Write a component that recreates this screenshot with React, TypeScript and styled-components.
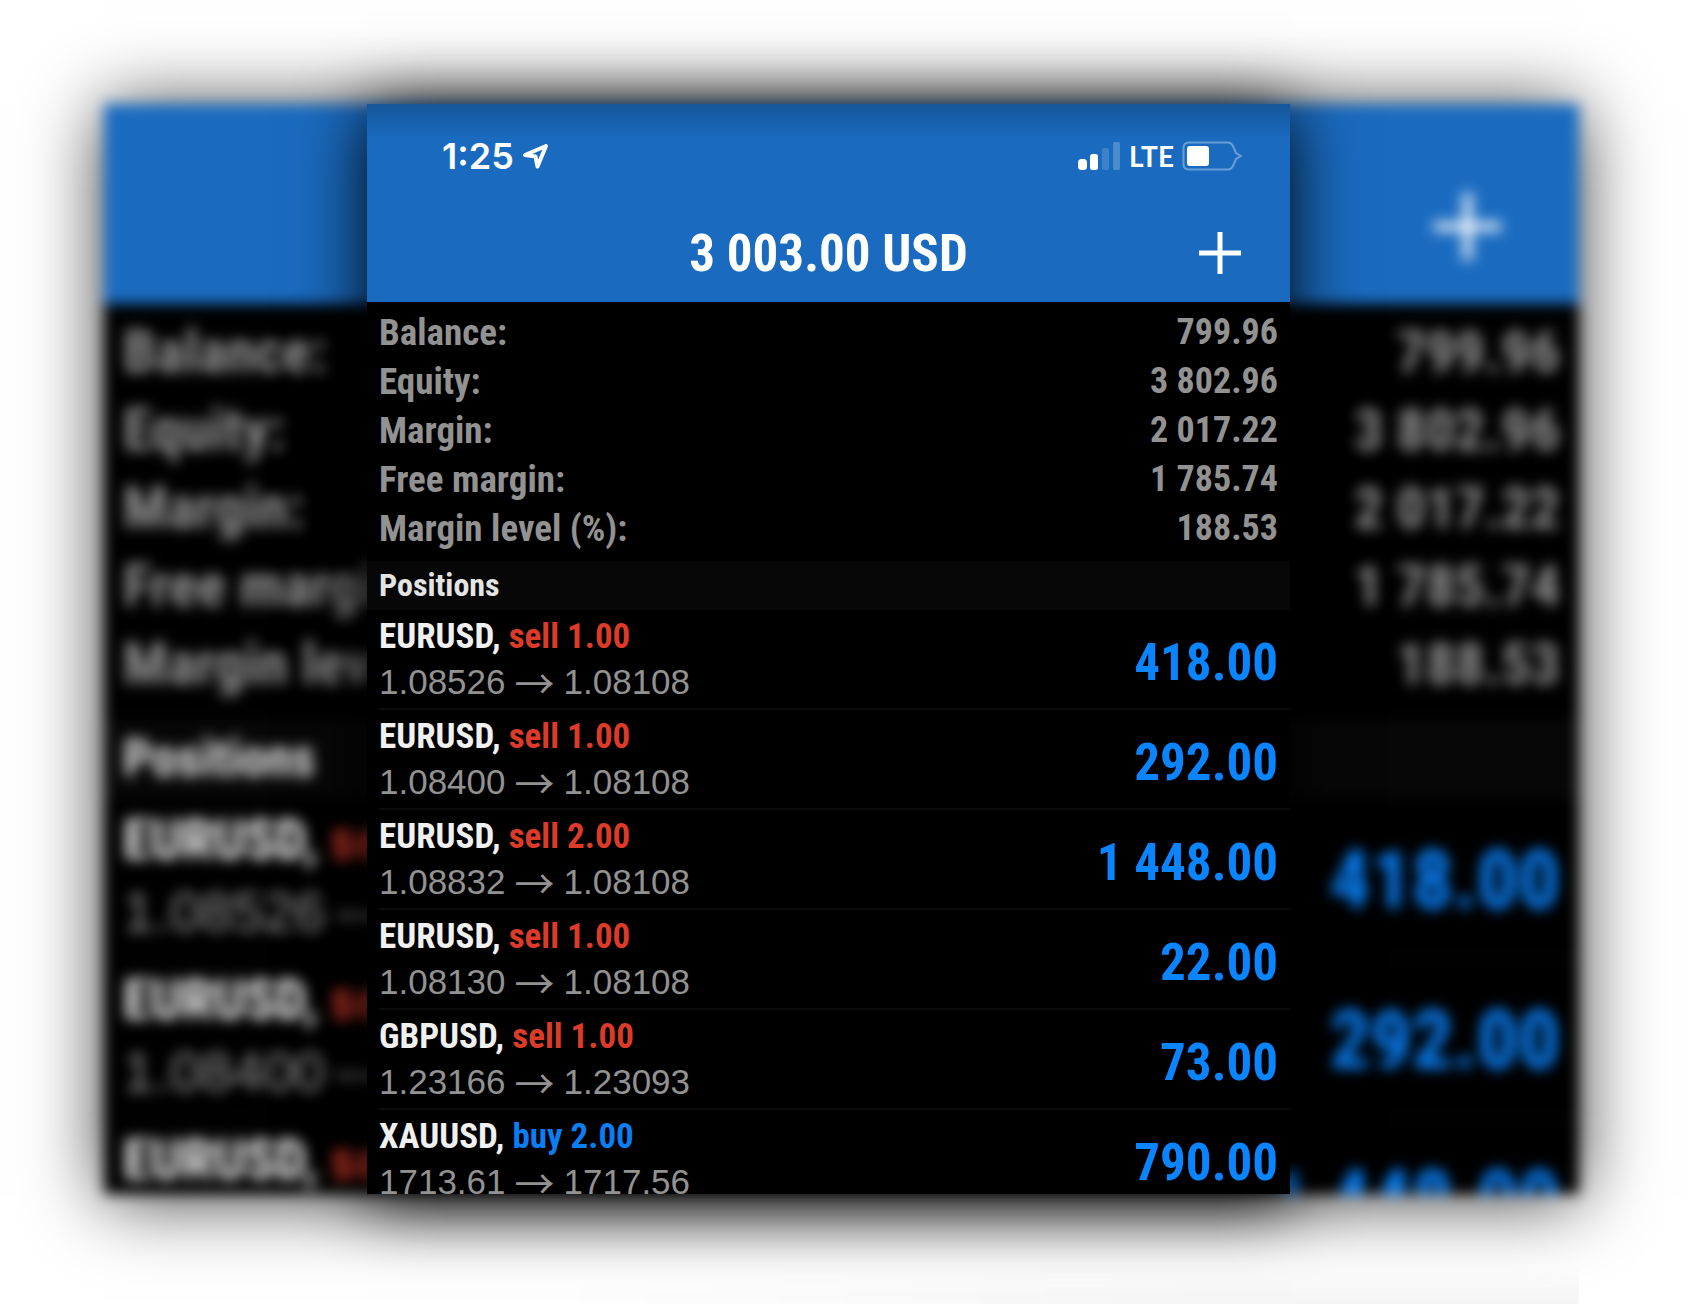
import React from "react";
import styled, { createGlobalStyle, css, ThemeProvider } from "styled-components";

const GlobalStyle = createGlobalStyle`
  *, *::before, *::after { box-sizing: border-box; }
  html, body { margin: 0; background: #ffffff; }
  body { overflow: hidden; }
`;

const condensed = `"Roboto Condensed", "Arial Narrow", "Liberation Sans", sans-serif`;
const regular = `"Liberation Sans", Arial, sans-serif`;

/* Two densities of the same screen: the sharp one in front and the enlarged one behind. */
const compact = {
  crop: 0,
  statusHeight: 100,
  statusPadding: "4px 48px 0 75px",
  navHeight: 98,
  gutter: 12,
  plus: 42,
  plusEdge: 49,
  title: 51,
  label: 37,
  value: 36,
  symbol: 35,
  section: 32,
  price: 35,
  arrow: 40,
  amount: 51,
  line: 49,
  summaryPadding: "6px 12px 8px",
  sectionHeight: 49,
  rowHeight: 100,
  rowTop: 4,
  symbolLine: 46,
  priceLine: 44,
  amountTop: 8,
};

const enlarged: typeof compact = {
  crop: 115,
  statusHeight: 160,
  statusPadding: "0 77px 0 118px",
  navHeight: 155,
  gutter: 19,
  plus: 67,
  plusEdge: 78,
  title: 82,
  label: 59,
  value: 58,
  symbol: 56,
  section: 51,
  price: 56,
  arrow: 64,
  amount: 82,
  line: 78,
  summaryPadding: "9px 19px 16px",
  sectionHeight: 80,
  rowHeight: 160,
  rowTop: 4,
  symbolLine: 74,
  priceLine: 70,
  amountTop: 4,
};

type Density = typeof compact;
const size = (key: keyof Density) => (p: { theme: any }) => `${p.theme[key]}px`;

const Page = styled.div`
  display: flex;
  flex-direction: column;
  min-height: 100vh;
  padding: 104px 117px 0 104px;
  overflow: hidden;
`;

const Stage = styled.main`
  display: grid;
  grid-template-columns: 263fr 923fr 289fr;
  grid-template-rows: calc(100vh - 214px);
`;

const Card = styled.section<{ $back?: boolean }>`
  grid-row: 1;
  grid-column: ${(p) => (p.$back ? "1 / -1" : "2")};
  min-width: 0;
  overflow: hidden;
  background: #000000;
  ${(p) =>
    p.$back
      ? css`
          filter: blur(7px);
          box-shadow: 0 4px 70px rgba(0, 0, 0, 0.8);
        `
      : css`
          z-index: 1;
          box-shadow: 0 6px 66px rgba(0, 0, 0, 0.98);
        `}
`;

const Content = styled.div`
  margin-top: -${size("crop")};
`;

const Header = styled.header<{ $shaded: boolean }>`
  color: #ffffff;
  background: ${(p) =>
    p.$shaded
      ? "linear-gradient(rgba(0, 0, 0, 0.2), rgba(0, 0, 0, 0) 36px), #1a6bc0"
      : "#1a6bc0"};
`;

const StatusBar = styled.div`
  display: flex;
  align-items: center;
  justify-content: space-between;
  height: ${size("statusHeight")};
  padding: ${(p) => (p.theme as any).statusPadding};
`;

const StatusGroup = styled.div`
  display: flex;
  align-items: center;
  gap: 8px;
`;

const Clock = styled.span`
  font: 600 36px/44px Inter, sans-serif;
`;

const Carrier = styled.span`
  font: bold 28px/44px Lato, sans-serif;
`;

const NavBar = styled.div`
  display: grid;
  grid-template-columns: 1fr auto 1fr;
  align-items: center;
  height: ${size("navHeight")};
  padding: 0 ${size("plusEdge")};
`;

const Title = styled.h1`
  grid-column: 2;
  margin: 0;
  padding-top: 2px;
  font: bold ${size("title")}/1.2 ${condensed};
  white-space: nowrap;
`;

const AddButton = styled.button`
  display: flex;
  grid-column: 3;
  justify-self: end;
  padding: 0;
  border: 0;
  background: none;
  color: inherit;

  svg {
    width: ${size("plus")};
    height: ${size("plus")};
  }
`;

const Summary = styled.dl`
  margin: 0;
  padding: ${(p) => (p.theme as any).summaryPadding};
  color: #929292;
  font: bold ${size("label")}/${size("line")} ${condensed};
`;

const SummaryRow = styled.div`
  display: flex;
  justify-content: space-between;
  height: ${size("line")};
  white-space: nowrap;

  dd {
    margin: 0;
    font-size: ${size("value")};
  }
`;

const SectionTitle = styled.h2`
  margin: 0;
  padding-left: ${size("gutter")};
  background: #070707;
  color: #e4e4e4;
  font: bold ${size("section")}/${size("sectionHeight")} ${condensed};
`;

const PositionList = styled.ul`
  margin: 0;
  padding: 0 0 0 ${size("gutter")};
  list-style: none;
`;

const PositionRow = styled.li`
  display: flex;
  align-items: center;
  justify-content: space-between;
  height: ${size("rowHeight")};
  padding-right: ${size("gutter")};
  border-bottom: 2px solid #0c0c0c;
  white-space: nowrap;
`;

const Deal = styled.div`
  align-self: flex-start;
  padding-top: ${size("rowTop")};
`;

const Symbol = styled.div`
  height: ${size("symbolLine")};
  color: #f0f0f0;
  font: bold ${size("symbol")}/${size("symbolLine")} ${condensed};
`;

const Side = styled.span<{ $buy: boolean }>`
  color: ${(p) => (p.$buy ? "#0a7ef2" : "#dc3b2a")};
`;

const Price = styled.div`
  display: flex;
  align-items: center;
  gap: 9px;
  height: ${size("priceLine")};
  color: #929292;
  font: ${size("price")}/${size("priceLine")} ${regular};
`;

const Arrow = styled.span`
  font: ${size("arrow")}/1 "Noto Sans CJK JP", sans-serif;
`;

const Amount = styled.div`
  padding-top: ${size("amountTop")};
  color: #0a84ff;
  font: bold ${size("amount")}/1.2 ${condensed};
`;

const Underglow = styled.div`
  height: 40px;
  margin-top: 70px;
  background: linear-gradient(90deg, rgba(0, 0, 0, 0) 30%, rgba(0, 0, 0, 0.04) 75%);
  mask-image: linear-gradient(transparent, #000000);
`;

const summary = [
  ["Balance:", "799.96"],
  ["Equity:", "3 802.96"],
  ["Margin:", "2 017.22"],
  ["Free margin:", "1 785.74"],
  ["Margin level (%):", "188.53"],
];

const positions = [
  { symbol: "EURUSD", side: "sell", lots: "1.00", from: "1.08526", to: "1.08108", profit: "418.00" },
  { symbol: "EURUSD", side: "sell", lots: "1.00", from: "1.08400", to: "1.08108", profit: "292.00" },
  { symbol: "EURUSD", side: "sell", lots: "2.00", from: "1.08832", to: "1.08108", profit: "1 448.00" },
  { symbol: "EURUSD", side: "sell", lots: "1.00", from: "1.08130", to: "1.08108", profit: "22.00" },
  { symbol: "GBPUSD", side: "sell", lots: "1.00", from: "1.23166", to: "1.23093", profit: "73.00" },
  { symbol: "XAUUSD", side: "buy", lots: "2.00", from: "1713.61", to: "1717.56", profit: "790.00" },
];

const LocationIcon = () => (
  <svg width="27" height="27" viewBox="0 0 27 27" fill="none" stroke="#fff" strokeWidth="4" strokeLinejoin="round">
    <path d="M24 3 3 12 13.500 13.500 15.500 23.500Z" />
  </svg>
);

const SignalIcon = () => (
  <svg width="43" height="28" viewBox="0 0 43 28" fill="#fff">
    <rect x="0" y="17" width="9" height="11" rx="3.5" />
    <rect x="12" y="12" width="8" height="16" rx="2.5" />
    <rect x="24" y="6" width="7" height="22" rx="2" opacity=".15" />
    <rect x="35" y="0" width="7" height="28" rx="2" opacity=".22" />
  </svg>
);

const BatteryIcon = () => (
  <svg width="60" height="30" viewBox="0 0 60 30">
    <path
      d="M7 1.500H46Q49 1.500 51 5L54 12 59 15 54 18 51 25Q49 28.500 46 28.500H7Q1.500 28.500 1.500 23V7Q1.500 1.500 7 1.500Z"
      fill="none"
      stroke="#fff"
      strokeWidth="2"
      opacity=".35"
    />
    <rect x="5" y="5" width="22" height="20" rx="3" fill="#fff" />
  </svg>
);

const PlusIcon = () => (
  <svg viewBox="0 0 42 42" stroke="#fff" strokeWidth="5">
    <path d="M0 21H42M21 0V42" />
  </svg>
);

function TradeScreen({ back = false }: { back?: boolean }) {
  const rows = back ? positions.slice(0, 3) : positions;
  return (
    <ThemeProvider theme={back ? enlarged : compact}>
      <Card $back={back} aria-hidden={back}>
        <Content>
          <Header $shaded={!back}>
            <StatusBar>
              {!back && (
                <>
                  <StatusGroup>
                    <Clock>1:25</Clock>
                    <LocationIcon />
                  </StatusGroup>
                  <StatusGroup>
                    <SignalIcon />
                    <Carrier>LTE</Carrier>
                    <BatteryIcon />
                  </StatusGroup>
                </>
              )}
            </StatusBar>
            <NavBar>
              {!back && <Title>3 003.00 USD</Title>}
              <AddButton type="button" aria-label="New order" tabIndex={back ? -1 : 0}>
                <PlusIcon />
              </AddButton>
            </NavBar>
          </Header>
          <Summary>
            {summary.map(([name, value]) => (
              <SummaryRow key={name}>
                <dt>{name}</dt>
                <dd>{value}</dd>
              </SummaryRow>
            ))}
          </Summary>
          <SectionTitle>Positions</SectionTitle>
          <PositionList>
            {rows.map((p) => (
              <PositionRow key={p.symbol + p.from}>
                <Deal>
                  <Symbol>
                    {p.symbol}, <Side $buy={p.side === "buy"}>{p.side} {p.lots}</Side>
                  </Symbol>
                  <Price>
                    <span>{p.from}</span>
                    <Arrow>→</Arrow>
                    <span>{p.to}</span>
                  </Price>
                </Deal>
                <Amount>{p.profit}</Amount>
              </PositionRow>
            ))}
          </PositionList>
        </Content>
      </Card>
    </ThemeProvider>
  );
}

export default function App() {
  return (
    <>
      <GlobalStyle />
      <Page>
        <Stage>
          <TradeScreen back />
          <TradeScreen />
        </Stage>
        <Underglow />
      </Page>
    </>
  );
}
